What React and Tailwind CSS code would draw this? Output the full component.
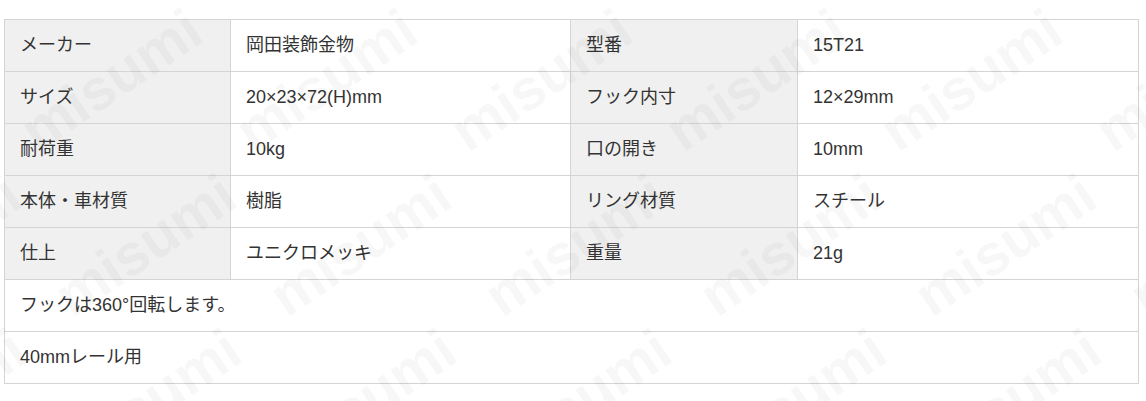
import React from "react";

const rows = [
  ["メーカー", "岡田装飾金物", "型番", "15T21"],
  ["サイズ", "20×23×72(H)mm", "フック内寸", "12×29mm"],
  ["耐荷重", "10kg", "口の開き", "10mm"],
  ["本体・車材質", "樹脂", "リング材質", "スチール"],
  ["仕上", "ユニクロメッキ", "重量", "21g"],
];

const notes = ["フックは360°回転します。", "40mmレール用"];

const marks = [];
[
  { y: 80, x0: 111 },
  { y: 245, x0: 145 },
  { y: 400, x0: 150 },
].forEach((r) => {
  for (let k = -1; k < 6; k++) marks.push({ x: r.x0 + 215 * k, y: r.y });
});

export default function App() {
  return (
    <div className="relative w-[1146px] h-[401px] bg-white overflow-hidden font-['Liberation_Sans','Noto_Sans_CJK_JP',sans-serif] text-[#333333]">
      <div className="pt-[19px] pl-[4px]">
        <div className="w-[1135px] border border-[#d4d4d4] border-b-0">
          {rows.map((r, i) => (
            <div key={i} className="flex h-[52px] border-b border-[#d4d4d4]">
              <div className="w-[226px] shrink-0 bg-[#f0f0f0] border-r border-[#d4d4d4] flex items-center px-[15px] text-[18px]">
                {r[0]}
              </div>
              <div className="w-[340px] shrink-0 border-r border-[#d4d4d4] flex items-center px-[15px] text-[18px]">
                {r[1]}
              </div>
              <div className="w-[227px] shrink-0 bg-[#f0f0f0] border-r border-[#d4d4d4] flex items-center px-[15px] text-[18px]">
                {r[2]}
              </div>
              <div className="flex-1 flex items-center px-[15px] text-[18px]">
                {r[3]}
              </div>
            </div>
          ))}
          {notes.map((n, i) => (
            <div key={i} className="flex items-center h-[52px] border-b border-[#d4d4d4] px-[15px] text-[18px]">
              {n}
            </div>
          ))}
        </div>
      </div>
      <div aria-hidden="true" className="absolute inset-0 pointer-events-none">
        {marks.map((m, i) => (
          <span
            key={i}
            className="absolute -translate-x-1/2 -translate-y-1/2 -rotate-[34deg] font-['Liberation_Sans',sans-serif] font-bold text-[58px] leading-none text-black/[0.03] whitespace-nowrap select-none"
            style={{ left: m.x, top: m.y }}
          >
            misumi
          </span>
        ))}
      </div>
    </div>
  );
}
